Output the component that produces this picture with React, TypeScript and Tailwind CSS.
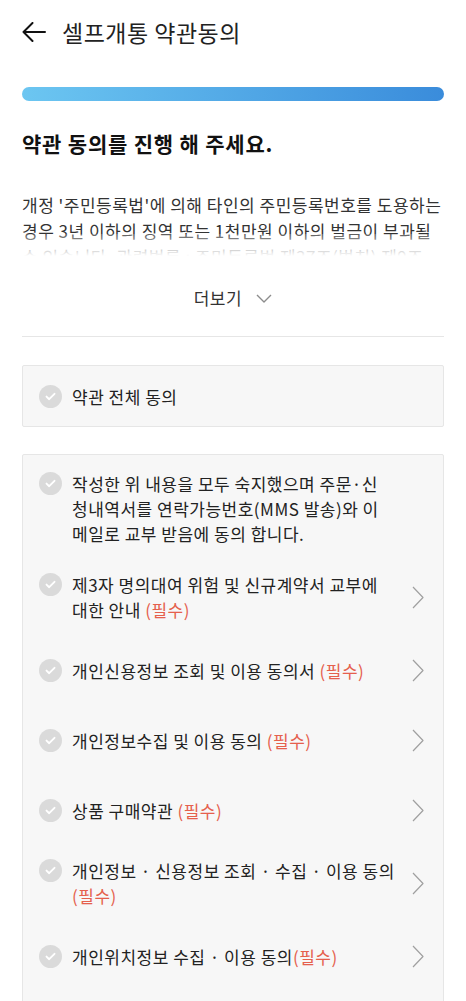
import { ReactNode } from "react";

const font = { fontFamily: '"Noto Sans CJK KR", "Noto Sans", sans-serif' };

function Req({ children = "(필수)" }: { children?: ReactNode }) {
  return <span className="text-[#e5604d]">{children}</span>;
}

function CheckCircle() {
  return (
    <span className="mt-[1px] flex h-[23px] w-[23px] shrink-0 items-center justify-center rounded-full bg-[#dadada]">
      <svg width="11" height="9" viewBox="0 0 11 9" fill="none">
        <path d="M1.5 4.6 4.2 7.2 9.5 1.8" stroke="#fff" strokeWidth="1.9" strokeLinecap="round" strokeLinejoin="round" />
      </svg>
    </span>
  );
}

function Chevron() {
  return (
    <svg width="12" height="23" viewBox="0 0 12 23" fill="none" className="shrink-0">
      <path d="M1 1 11 11.5 1 22" stroke="#a0a0a0" strokeWidth="1.2" strokeLinejoin="round" />
    </svg>
  );
}

type Term = { lines: ReactNode[]; chevron: boolean };

const terms: Term[] = [
  {
    lines: ["작성한 위 내용을 모두 숙지했으며 주문·신", "청내역서를 연락가능번호(MMS 발송)와 이", "메일로 교부 받음에 동의 합니다."],
    chevron: false,
  },
  {
    lines: ["제3자 명의대여 위험 및 신규계약서 교부에", <>대한 안내 <Req /></>],
    chevron: true,
  },
  { lines: [<>개인신용정보 조회 및 이용 동의서 <Req /></>], chevron: true },
  { lines: [<>개인정보수집 및 이용 동의 <Req /></>], chevron: true },
  { lines: [<>상품 구매약관 <Req /></>], chevron: true },
  { lines: ["개인정보 · 신용정보 조회 · 수집 · 이용 동의", <Req />], chevron: true },
  { lines: [<>개인위치정보 수집 · 이용 동의<Req /></>], chevron: true },
];

export default function App() {
  return (
    <div className="min-h-screen bg-white px-[22px] text-[#222]" style={font}>
      {/* 헤더 */}
      <header className="flex h-[64px] items-center gap-[16px]">
        <svg width="24" height="20" viewBox="0 0 24 20" fill="none">
          <path d="M1.5 10H23M10.5 1 1.5 10l9 9" stroke="#111" strokeWidth="2" strokeLinecap="round" strokeLinejoin="round" />
        </svg>
        <h1 className="text-[23px] font-normal leading-none tracking-[0.5px] text-[#222]">셀프개통 약관동의</h1>
      </header>

      {/* 진행바 */}
      <div className="mt-[23px] h-[14px] w-full rounded-full bg-gradient-to-r from-[#6cc6f1] to-[#3a8cdb]" />

      <h2 className="mt-[28px] text-[21px] font-bold leading-[28px] tracking-[0.8px] text-[#111]">약관 동의를 진행 해 주세요.</h2>

      {/* 안내문 */}
      <div className="relative mt-[35px] h-[64px] overflow-hidden text-[17px] leading-[26px] tracking-[0.5px] text-[#333]">
        <p className="whitespace-nowrap">개정 '주민등록법'에 의해 타인의 주민등록번호를 도용하는</p>
        <p className="whitespace-nowrap">경우 3년 이하의 징역 또는 1천만원 이하의 벌금이 부과될</p>
        <p className="whitespace-nowrap">수 있습니다. 관련법률 : 주민등록법 제37조(벌칙) 제9조</p>
        <div className="absolute inset-x-0 bottom-0 h-[22px] bg-gradient-to-b from-white/20 to-white" />
      </div>

      <button className="mx-auto mt-[30px] flex h-[24px] items-center gap-[14px] text-[17px] tracking-[0.6px] text-[#333]">
        더보기
        <svg width="16" height="9" viewBox="0 0 16 9" fill="none">
          <path d="M1 1l7 7 7-7" stroke="#8c8c8c" strokeWidth="1.4" strokeLinejoin="round" />
        </svg>
      </button>

      <div className="mt-[26px] h-px w-full bg-[#e6e6e6]" />

      {/* 전체 동의 */}
      <div className="mt-[28px] flex h-[62px] items-center gap-[10px] rounded-[2px] border border-[#e6e6e6] bg-[#f7f7f7] pl-[16px]">
        <CheckCircle />
        <span className="text-[17px] leading-[25px] tracking-[0.5px] text-[#222]">약관 전체 동의</span>
      </div>

      {/* 개별 약관 */}
      <div className="mt-[27px] rounded-[2px] border border-[#e6e6e6] bg-[#f7f7f7] pb-[24px] pt-[3px]">
        {terms.map((t, i) => (
          <div key={i} className="flex min-h-[70px] items-center py-[13px] pl-[16px] pr-[19px]">
            <div className="flex flex-1 items-start gap-[10px]">
              <CheckCircle />
              <div className="text-[17px] leading-[25px] tracking-[0.5px] text-[#222]">
                {t.lines.map((l, j) => (
                  <div key={j} className="whitespace-nowrap">
                    {l}
                  </div>
                ))}
              </div>
            </div>
            {t.chevron && <Chevron />}
          </div>
        ))}
      </div>
    </div>
  );
}
